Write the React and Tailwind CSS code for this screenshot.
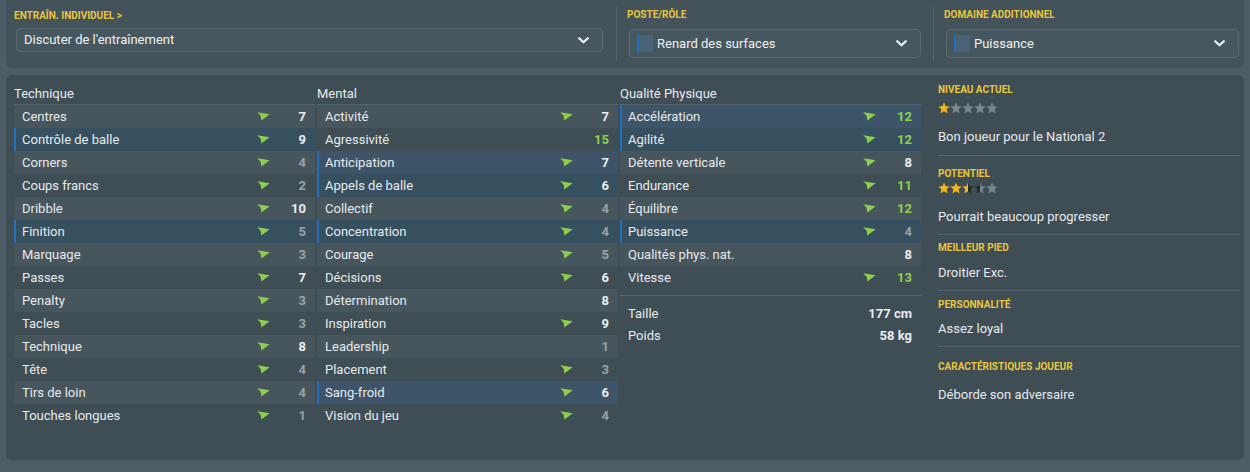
import React from 'react';

const technique = [
  ['Centres', 7, true, false],
  ['Contrôle de balle', 9, true, true],
  ['Corners', 4, true, false],
  ['Coups francs', 2, true, false],
  ['Dribble', 10, true, false],
  ['Finition', 5, true, true],
  ['Marquage', 3, true, false],
  ['Passes', 7, true, false],
  ['Penalty', 3, true, false],
  ['Tacles', 3, true, false],
  ['Technique', 8, true, false],
  ['Tête', 4, true, false],
  ['Tirs de loin', 4, true, false],
  ['Touches longues', 1, true, false],
];

const mental = [
  ['Activité', 7, true, false],
  ['Agressivité', 15, false, false],
  ['Anticipation', 7, true, true],
  ['Appels de balle', 6, true, true],
  ['Collectif', 4, true, false],
  ['Concentration', 4, true, true],
  ['Courage', 5, true, false],
  ['Décisions', 6, true, false],
  ['Détermination', 8, false, false],
  ['Inspiration', 9, true, false],
  ['Leadership', 1, false, false],
  ['Placement', 3, true, false],
  ['Sang-froid', 6, true, true],
  ['Vision du jeu', 4, true, false],
];

const physique = [
  ['Accélération', 12, true, true],
  ['Agilité', 12, true, true],
  ['Détente verticale', 8, true, false],
  ['Endurance', 11, true, false],
  ['Équilibre', 12, true, false],
  ['Puissance', 4, true, true],
  ['Qualités phys. nat.', 8, false, false],
  ['Vitesse', 13, true, false],
];

function TrendArrow() {
  return (
    <svg width="13" height="9" viewBox="0 0 13 9">
      <polygon points="0.3,0.3 12.7,2.2 4.4,8.6 3.6,3.8" fill="#8ccf4c" />
    </svg>
  );
}

function Chevron() {
  return (
    <svg width="11" height="7" viewBox="0 0 11 7">
      <path d="M1.2 1.2 L5.5 5.3 L9.8 1.2" fill="none" stroke="#eef1f2" strokeWidth="2.2" strokeLinecap="round" strokeLinejoin="round" />
    </svg>
  );
}

function valueColor(v) {
  if (v >= 11) return 'text-[#8fcf4e]';
  if (v >= 6) return 'text-[#e9edef]';
  return 'text-[#99a3a9]';
}

function AttrRow({ name, value, arrow, hl, idx }) {
  const light = idx % 2 === 0;
  let bg = light ? 'bg-[#47555d]' : 'bg-[#3f4d55]';
  if (hl) bg = light ? 'bg-[#3e5569]' : 'bg-[#37505f]';
  return (
    <div className={`flex items-center h-[23px] pr-[9px] ${bg} ${hl ? 'border-l-2 border-[#2170bf] pl-[6px]' : 'pl-[8px]'}`}>
      <span className="flex-1 text-[13px] text-[#e6eaec] truncate">{name}</span>
      <span className="w-[13px] flex items-center">{arrow && <TrendArrow />}</span>
      <span className={`w-[36px] text-right text-[13px] font-bold ${valueColor(value)}`}>{value}</span>
    </div>
  );
}

function AttrColumn({ title, rows, children }) {
  return (
    <div className="w-[301px] flex flex-col">
      <div className="h-[22px] border-b border-[#56656d] text-[13px] text-[#e6eaec] leading-[21px]">{title}</div>
      {rows.map(([n, v, a, h], i) => (
        <AttrRow key={n} name={n} value={v} arrow={a} hl={h} idx={i} />
      ))}
      {children}
    </div>
  );
}

function Star({ fill }) {
  // fill: 'gold' | 'grey' | 'gold-dark' | 'dark-grey'
  const id = `st-${fill}`;
  const halves = {
    gold: ['#f2b51a', '#f2b51a'],
    grey: ['#7b868c', '#7b868c'],
    'gold-dark': ['#f2b51a', '#25292c'],
    'dark-grey': ['#25292c', '#7b868c'],
  }[fill];
  return (
    <svg width="12" height="12" viewBox="0 0 12 12">
      <defs>
        <linearGradient id={id} x1="0" x2="1" y1="0" y2="0">
          <stop offset="0.5" stopColor={halves[0]} />
          <stop offset="0.5" stopColor={halves[1]} />
        </linearGradient>
      </defs>
      <polygon
        points="6,0.4 7.6,4.2 11.7,4.5 8.6,7.2 9.6,11.4 6,9.2 2.4,11.4 3.4,7.2 0.3,4.5 4.4,4.2"
        fill={`url(#${id})`}
      />
    </svg>
  );
}

function Label({ children, className = '' }) {
  return (
    <div className={`h-[14px] leading-[14px] text-[10px] font-bold uppercase text-[#e8c63c] ${className}`}>{children}</div>
  );
}

function InfoText({ children, className = '' }) {
  return <div className={`h-[16px] leading-[16px] text-[13px] text-[#e6eaec] ${className}`}>{children}</div>;
}

function Divider({ className = '' }) {
  return <div className={`h-px bg-[#56656d] ${className}`} />;
}

function Dropdown({ text, swatch, className = '' }) {
  return (
    <div className={`flex items-center rounded-[4px] border border-[#5a6970] bg-[#475760] pr-[13px] ${className}`}>
      {swatch && <span className="w-[16px] h-[17px] ml-[7px] mr-[4px] border-l-2 border-[#1d6fc2] bg-[#4a6275]" />}
      <span className={`flex-1 text-[13px] text-[#eef1f2] ${swatch ? '' : 'pl-[7px]'}`}>{text}</span>
      <Chevron />
    </div>
  );
}

export default function App() {
  return (
    <div className="w-[1250px] h-[472px] bg-[#4e5d65] px-[6px] font-[Roboto,'Liberation_Sans',sans-serif] overflow-hidden">
      {/* selectors bar */}
      <div className="h-[68px] bg-[#44525a] rounded-b-[6px] flex">
        <div className="w-[610px] pl-[8px] pt-[9px]">
          <Label>Entraîn. individuel &gt;</Label>
          <Dropdown text="Discuter de l'entraînement" className="h-[24px] mt-[5px] ml-[2px] mr-[13px]" />
        </div>
        <div className="w-px bg-[#55646c] my-[7px]" />
        <div className="w-[316px] pl-[10px] pt-[8px]">
          <Label>Poste/Rôle</Label>
          <Dropdown text="Renard des surfaces" swatch className="h-[29px] mt-[7px] ml-[2px] mr-[12px]" />
        </div>
        <div className="w-px bg-[#55646c] my-[7px]" />
        <div className="flex-1 pl-[10px] pt-[8px]">
          <Label>Domaine additionnel</Label>
          <Dropdown text="Puissance" swatch className="h-[29px] mt-[7px] ml-[2px] mr-[5px]" />
        </div>
      </div>

      {/* attributes panel */}
      <div className="mt-[7px] h-[385px] bg-[#3f4d55] rounded-[6px] flex pl-[8px] pt-[8px]">
        <div className="flex gap-[2px]">
          <AttrColumn title="Technique" rows={technique} />
          <AttrColumn title="Mental" rows={mental} />
          <AttrColumn title="Qualité Physique" rows={physique}>
            <Divider className="mt-[6px]" />
            <div className="mt-[7px] flex items-center h-[22px] px-[8px] pr-[9px] text-[13px]">
              <span className="flex-1 text-[#e6eaec]">Taille</span>
              <span className="font-bold text-[#e9edef]">177 cm</span>
            </div>
            <div className="flex items-center h-[22px] px-[8px] pr-[9px] text-[13px]">
              <span className="flex-1 text-[#e6eaec]">Poids</span>
              <span className="font-bold text-[#e9edef]">58 kg</span>
            </div>
          </AttrColumn>
        </div>

        <div className="flex-1 ml-[9px] pl-[8px] pr-[4px] flex flex-col">
          <Label>Niveau actuel</Label>
          <div className="mt-[5px] flex h-[12px]">
            <Star fill="gold" />
            <Star fill="grey" />
            <Star fill="grey" />
            <Star fill="grey" />
            <Star fill="grey" />
          </div>
          <InfoText className="mt-[15px]">Bon joueur pour le National 2</InfoText>
          <Divider className="mt-[10px]" />

          <Label className="mt-[11px]">Potentiel</Label>
          <div className="mt-[1px] flex h-[12px]">
            <Star fill="gold" />
            <Star fill="gold" />
            <Star fill="gold-dark" />
            <Star fill="dark-grey" />
            <Star fill="grey" />
          </div>
          <InfoText className="mt-[15px]">Pourrait beaucoup progresser</InfoText>
          <Divider className="mt-[9px]" />

          <Label className="mt-[6px]">Meilleur pied</Label>
          <InfoText className="mt-[10px]">Droitier Exc.</InfoText>
          <Divider className="mt-[9px]" />

          <Label className="mt-[7px]">Personnalité</Label>
          <InfoText className="mt-[9px]">Assez loyal</InfoText>
          <Divider className="mt-[9px]" />

          <Label className="mt-[13px]">Caractéristiques joueur</Label>
          <InfoText className="mt-[13px]">Déborde son adversaire</InfoText>
        </div>
      </div>
    </div>
  );
}
